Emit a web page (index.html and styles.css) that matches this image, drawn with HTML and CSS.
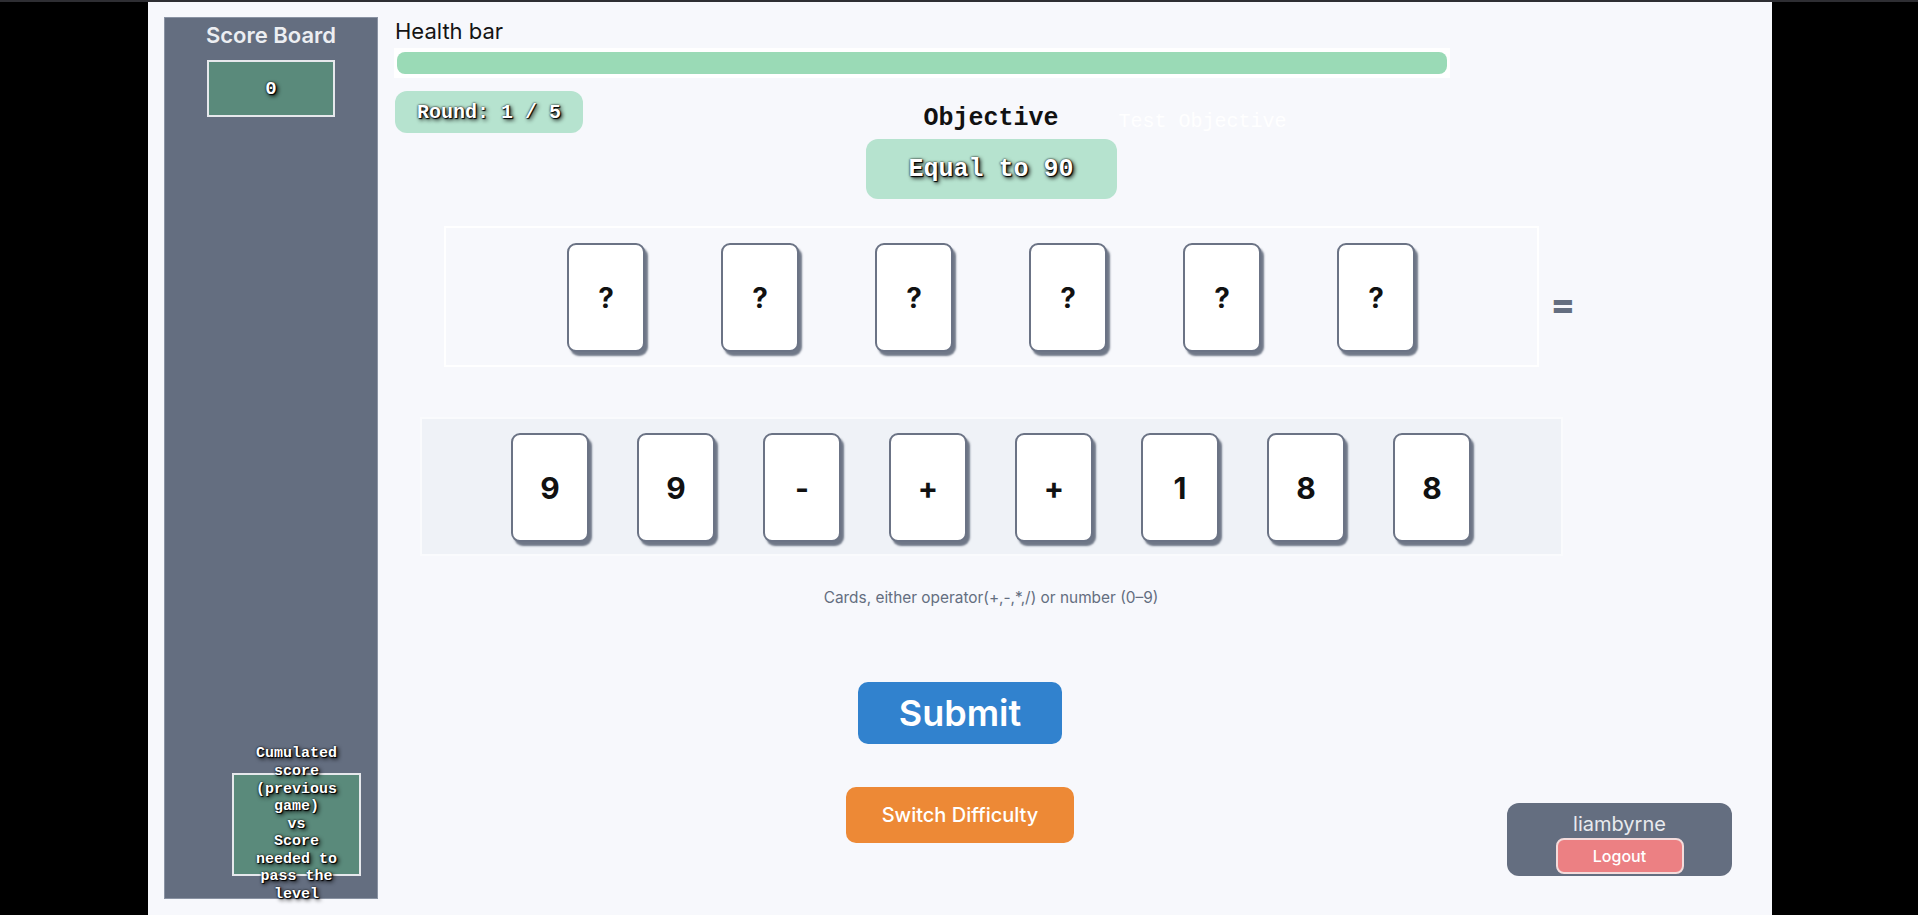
FILE: index.html
```html
<!DOCTYPE html>
<html lang="en">
<head>
<meta charset="utf-8">
<title>Card Game</title>
<link rel="stylesheet" href="styles.css">
</head>
<body>
<div class="topline"></div>
<div class="screen">
  <aside class="sidebar">
    <h2 class="sb-title">Score Board</h2>
    <div class="score-box"><span class="shadow-text score-val">0</span></div>
    <div class="cumul-box">
      <p class="cumul-text shadow-text">Cumulated score (previous game)<br>vs<br>Score needed to pass the level</p>
    </div>
  </aside>

  <main class="main">
    <div class="health-label">Health bar</div>
    <div class="health-track"><div class="health-fill" style="width:100%"></div></div>

    <div class="obj-row">
      <div class="round-pill"><span class="shadow-text">Round: 1 / 5</span></div>
      <h3 class="obj-title">Objective</h3>
      <span class="obj-ghost">Test Objective</span>
    </div>
    <div class="obj-box"><span class="shadow-text">Equal to 90</span></div>

    <div class="eq-row">
      <div class="slots">
        <div class="card slot">?</div>
        <div class="card slot">?</div>
        <div class="card slot">?</div>
        <div class="card slot">?</div>
        <div class="card slot">?</div>
        <div class="card slot">?</div>
      </div>
      <span class="equals">=</span>
    </div>

    <div class="hand">
      <div class="card">9</div>
      <div class="card">9</div>
      <div class="card">-</div>
      <div class="card">+</div>
      <div class="card">+</div>
      <div class="card">1</div>
      <div class="card">8</div>
      <div class="card">8</div>
    </div>

    <p class="hint">Cards, either operator(+,-,*,/) or number (0–9)</p>
  </main>

  <section class="actions">
    <div class="btns">
      <button class="btn submit">Submit</button>
      <button class="btn switch">Switch Difficulty</button>
    </div>
    <div class="user">
      <div class="user-name">liambyrne</div>
      <button class="btn logout">Logout</button>
    </div>
  </section>
</div>
</body>
</html>
```

FILE: styles.css
```css
* { box-sizing: border-box; }

html, body {
  margin: 0;
  padding: 0;
}

body {
  background: #000000;
  height: 915px;
  overflow: hidden;
  font-family: "Inter", "Liberation Sans", sans-serif;
}

.topline {
  height: 2px;
  background: #2e2e33;
}

.screen {
  margin-left: 148px;
  width: 1624px;
  height: 913px;
  background: #f7f8fc;
  display: grid;
  grid-template-columns: 247px 1192px 1fr;
  grid-template-rows: auto 1fr;
}

/* ---------- sidebar ---------- */
.sidebar {
  grid-column: 1;
  grid-row: 1 / 3;
  align-self: start;
  margin: 15px 0 0 16px;
  width: 214px;
  height: 882px;
  background: #646e80;
  border: 1px solid #8a93a3;
  display: flex;
  flex-direction: column;
  align-items: center;
  padding-top: 4px;
}

.sb-title {
  margin: 0;
  font-size: 22px;
  line-height: 27px;
  font-weight: 600;
  color: #eceef2;
}

.score-box {
  margin-top: 11px;
  width: 128px;
  height: 57px;
  background: #5a8a7b;
  border: 2px solid #e6e8ec;
  display: flex;
  align-items: center;
  justify-content: center;
}

.shadow-text {
  font-family: "Liberation Mono", "Courier New", monospace;
  font-weight: bold;
  color: #ffffff;
  text-shadow: 0 0 2px #000000, 1px 1px 1px #000000, 2px 2px 4px #000000;
}

.score-val {
  font-size: 19px;
}

.cumul-box {
  margin-top: auto;
  align-self: flex-end;
  margin-right: 16px;
  margin-bottom: 22px;
  width: 129px;
  height: 103px;
  background: #5a8a7b;
  border: 2px solid #e6e8ec;
  display: flex;
  align-items: center;
  justify-content: center;
}

.cumul-text {
  margin: 0;
  width: 95px;
  font-size: 15px;
  line-height: 17.6px;
  text-align: center;
  flex-shrink: 0;
}

/* ---------- main ---------- */
.main {
  grid-column: 2;
  grid-row: 1;
  padding-top: 16px;
  display: flex;
  flex-direction: column;
}

.health-label {
  font-size: 22px;
  line-height: 27px;
  color: #141414;
}

.health-track {
  margin-top: 3px;
  margin-left: -1px;
  width: 1056px;
  padding: 4px 3px;
  background: #ffffff;
}

.health-fill {
  height: 22px;
  border-radius: 8px;
  background: #9adab6;
}

.obj-row {
  margin-top: 13px;
  display: grid;
  grid-template-columns: 1fr auto 1fr;
  align-items: start;
}

.round-pill {
  justify-self: start;
  width: 188px;
  height: 42px;
  border-radius: 12px;
  background: #b6e3cf;
  display: flex;
  align-items: center;
  justify-content: center;
  font-size: 20px;
}

.obj-title {
  margin: 14px 0 0;
  font-family: "Liberation Mono", "Courier New", monospace;
  font-size: 25px;
  line-height: 28px;
  font-weight: bold;
  color: #111111;
}

.obj-ghost {
  justify-self: start;
  margin: 19px 0 0 60px;
  font-family: "Liberation Mono", "Courier New", monospace;
  font-size: 20px;
  line-height: 24px;
  color: #ffffff;
}

.obj-box {
  margin: 5px auto 0;
  width: 251px;
  height: 60px;
  border-radius: 12px;
  background: #b6e3cf;
  display: flex;
  align-items: center;
  justify-content: center;
  font-size: 25px;
}

.eq-row {
  margin-top: 27px;
  display: grid;
  grid-template-columns: 1fr 1095px 1fr;
}

.slots {
  grid-column: 2;
  height: 141px;
  border: 2px solid #ffffff;
  display: flex;
  justify-content: center;
  align-items: flex-start;
  gap: 76px;
  padding-top: 15px;
}

.equals {
  grid-column: 3;
  align-self: center;
  justify-self: start;
  margin: 14px 0 0 12px;
  font-family: "Inter", "Liberation Sans", sans-serif;
  font-size: 36px;
  line-height: 40px;
  font-weight: 800;
  color: #646e80;
}

.card {
  width: 78px;
  height: 109px;
  flex-shrink: 0;
  background: #ffffff;
  border: 2px solid #6b7385;
  border-radius: 9px;
  box-shadow: 3px 4px 2px rgba(88, 97, 115, 0.85);
  display: flex;
  align-items: center;
  justify-content: center;
  font-family: "Inter", "Liberation Sans", sans-serif;
  font-weight: 700;
  font-size: 30px;
  color: #111111;
}

.slot {
  font-size: 28px;
}

.hand {
  margin: 50px auto 0;
  width: 1143px;
  height: 139px;
  background: #eff2f7;
  border: 2px solid #fafbfd;
  display: flex;
  justify-content: center;
  align-items: flex-start;
  gap: 48px;
  padding-top: 14px;
}

.hint {
  margin: 33px 0 0;
  text-align: center;
  font-size: 15.4px;
  line-height: 17px;
  color: #646e80;
}

/* ---------- bottom actions ---------- */
.actions {
  grid-column: 1 / -1;
  grid-row: 2;
  margin-top: 76px;
  display: grid;
  grid-template-columns: 1fr auto 1fr;
  align-items: start;
}

.btns {
  grid-column: 2;
  display: flex;
  flex-direction: column;
  align-items: center;
}

.btn {
  border: none;
  font-family: "Inter", "Liberation Sans", sans-serif;
  color: #ffffff;
  cursor: pointer;
  padding: 0;
}

.submit {
  width: 204px;
  height: 62px;
  border-radius: 10px;
  background: #3182ce;
  font-size: 36px;
  font-weight: 600;
}

.switch {
  margin-top: 43px;
  width: 228px;
  height: 56px;
  border-radius: 10px;
  background: #ed8936;
  font-size: 20px;
  font-weight: 500;
}

.user {
  grid-column: 3;
  justify-self: end;
  margin: 121px 40px 0 0;
  width: 225px;
  height: 73px;
  border-radius: 12px;
  background: #646e80;
  padding-top: 9px;
  display: flex;
  flex-direction: column;
  align-items: center;
}

.user-name {
  font-size: 20px;
  line-height: 25px;
  color: #e8eaee;
}

.logout {
  margin-top: 1px;
  width: 128px;
  height: 36px;
  border-radius: 8px;
  border: 2px solid #f4dcdc;
  background: #ec8083;
  font-size: 16px;
  font-weight: 500;
}
```
